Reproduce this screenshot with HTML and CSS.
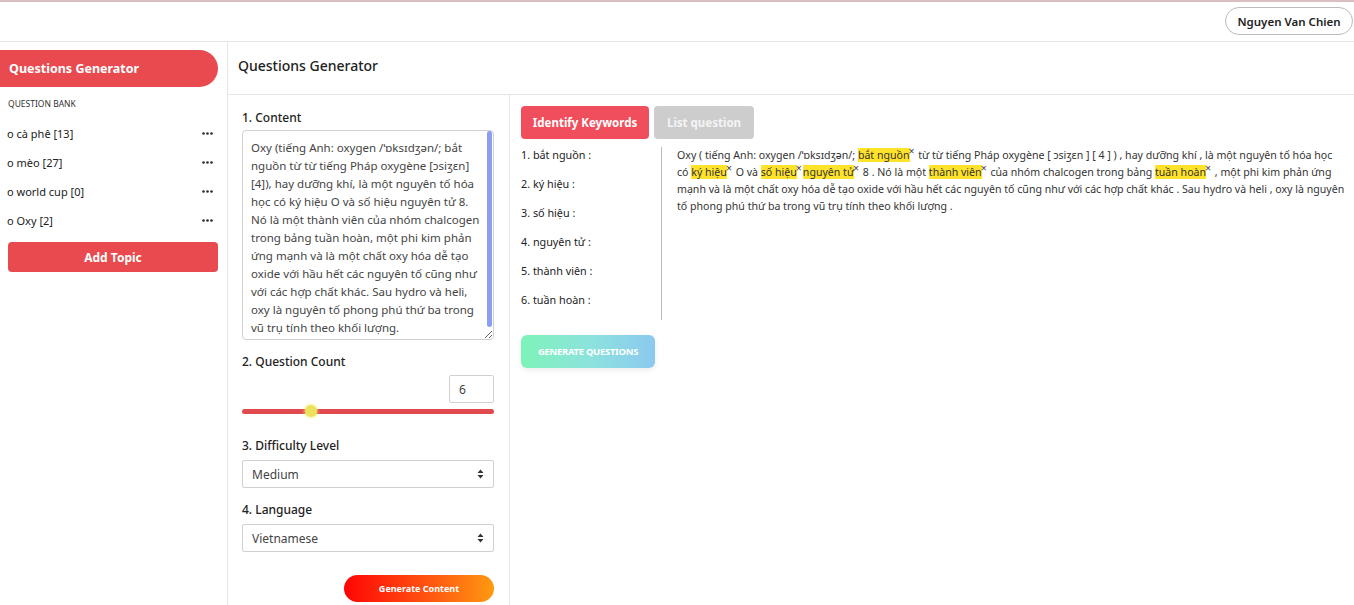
FILE: index.html
```html
<!DOCTYPE html>
<html lang="vi">
<head>
<meta charset="utf-8">
<title>Questions Generator</title>
<link rel="stylesheet" href="styles.css">
</head>
<body>
<header class="topbar">
  <button class="user-btn">Nguyen Van Chien</button>
</header>
<div class="app">
  <aside class="sidebar">
    <div class="brand">Questions Generator</div>
    <div class="bank-title">QUESTION BANK</div>
    <ul class="topics">
      <li class="topic"><span>o cà phê [13]</span><svg class="more" width="11" height="3" viewBox="0 0 11 3"><circle cx="1.5" cy="1.5" r="1.3"/><circle cx="5.5" cy="1.5" r="1.3"/><circle cx="9.5" cy="1.5" r="1.3"/></svg></li>
      <li class="topic"><span>o mèo [27]</span><svg class="more" width="11" height="3" viewBox="0 0 11 3"><circle cx="1.5" cy="1.5" r="1.3"/><circle cx="5.5" cy="1.5" r="1.3"/><circle cx="9.5" cy="1.5" r="1.3"/></svg></li>
      <li class="topic"><span>o world cup [0]</span><svg class="more" width="11" height="3" viewBox="0 0 11 3"><circle cx="1.5" cy="1.5" r="1.3"/><circle cx="5.5" cy="1.5" r="1.3"/><circle cx="9.5" cy="1.5" r="1.3"/></svg></li>
      <li class="topic"><span>o Oxy [2]</span><svg class="more" width="11" height="3" viewBox="0 0 11 3"><circle cx="1.5" cy="1.5" r="1.3"/><circle cx="5.5" cy="1.5" r="1.3"/><circle cx="9.5" cy="1.5" r="1.3"/></svg></li>
    </ul>
    <button class="add-topic">Add Topic</button>
  </aside>
  <main class="main">
    <div class="main-header">Questions Generator</div>
    <div class="main-body">
      <section class="form">
        <label class="field-label">1. Content</label>
        <div class="content-wrap">
          <textarea class="content-box">Oxy (tiếng Anh: oxygen /ˈɒksɪdʒən/; bắt nguồn từ từ tiếng Pháp oxygène [ɔsiʒɛn] [4]), hay dưỡng khí, là một nguyên tố hóa học có ký hiệu O và số hiệu nguyên tử 8. Nó là một thành viên của nhóm chalcogen trong bảng tuần hoàn, một phi kim phản ứng mạnh và là một chất oxy hóa dễ tạo oxide với hầu hết các nguyên tố cũng như với các hợp chất khác. Sau hydro và heli, oxy là nguyên tố phong phú thứ ba trong vũ trụ tính theo khối lượng.</textarea>
          <span class="scroll-thumb"></span>
        </div>
        <label class="field-label">2. Question Count</label>
        <div class="count-row"><input class="count-input" type="text" value="6"></div>
        <input class="range" type="range" min="1" max="20" value="6">
        <label class="field-label">3. Difficulty Level</label>
        <div class="select-wrap">
          <select class="select"><option>Medium</option></select>
          <svg class="select-arrow" width="7" height="10" viewBox="0 0 7 10"><path d="M3.5 0.5 L6.5 4 H0.5 Z M3.5 9.5 L6.5 6 H0.5 Z" fill="#333"/></svg>
        </div>
        <label class="field-label">4. Language</label>
        <div class="select-wrap">
          <select class="select"><option>Vietnamese</option></select>
          <svg class="select-arrow" width="7" height="10" viewBox="0 0 7 10"><path d="M3.5 0.5 L6.5 4 H0.5 Z M3.5 9.5 L6.5 6 H0.5 Z" fill="#333"/></svg>
        </div>
        <div class="gen-row"><button class="gen-content">Generate Content</button></div>
      </section>
      <section class="result">
        <div class="tabs">
          <button class="tab tab-active">Identify Keywords</button>
          <button class="tab tab-muted">List question</button>
        </div>
        <div class="kw-area">
          <ol class="kw-list">
            <li>1. bắt nguồn :</li>
            <li>2. ký hiệu :</li>
            <li>3. số hiệu :</li>
            <li>4. nguyên tử :</li>
            <li>5. thành viên :</li>
            <li>6. tuần hoàn :</li>
          </ol>
          <p class="kw-text">Oxy ( tiếng Anh: oxygen /ˈɒksɪdʒən/; <mark class="hl">bắt nguồn</mark><sup class="x">×</sup> từ từ tiếng Pháp oxygène [ ɔsiʒɛn ] [ 4 ] ) , hay dưỡng khí , là một nguyên tố hóa học<br>có <mark class="hl">ký hiệu</mark><sup class="x">×</sup> O và <mark class="hl">số hiệu</mark><sup class="x">×</sup><mark class="hl">nguyên tử</mark><sup class="x">×</sup> 8 . Nó là một <mark class="hl">thành viên</mark><sup class="x">×</sup> của nhóm chalcogen trong bảng <mark class="hl">tuần hoàn</mark><sup class="x">×</sup> , một phi kim phản ứng<br>mạnh và là một chất oxy hóa dễ tạo oxide với hầu hết các nguyên tố cũng như với các hợp chất khác . Sau hydro và heli , oxy là nguyên<br>tố phong phú thứ ba trong vũ trụ tính theo khối lượng .</p>
        </div>
        <button class="gen-questions">GENERATE QUESTIONS</button>
      </section>
    </div>
  </main>
</div>
</body>
</html>
```

FILE: styles.css
```css
* { box-sizing: border-box; }
html, body { margin: 0; padding: 0; }
body {
  font-family: "Noto Sans", "Open Sans", sans-serif;
  color: #222;
  background: #fff;
  height: 605px;
  overflow: hidden;
}
button { font-family: inherit; cursor: pointer; }

.topbar {
  height: 42px;
  border-top: 2px solid #d9bfc2;
  border-bottom: 1px solid #e6e6e6;
  display: flex;
  justify-content: flex-end;
  align-items: flex-start;
  padding: 5px 1px 0 0;
}
.user-btn {
  height: 28px;
  width: 128px;
  padding: 0;
  border: 1px solid #bbb;
  border-radius: 14px;
  background: #fff;
  font-size: 11.5px;
  font-weight: 600;
  color: #222;
  white-space: nowrap;
}

.app {
  display: flex;
  height: calc(605px - 42px);
}
.sidebar {
  width: 228px;
  border-right: 1px solid #e6e6e6;
  padding-top: 8px;
  flex-shrink: 0;
}
.brand {
  width: 218px;
  height: 37px;
  background: #e84a4f;
  color: #fff;
  font-weight: 700;
  font-size: 12.5px;
  display: flex;
  align-items: center;
  padding-left: 9px;
  border-radius: 0 19px 19px 0;
}
.bank-title {
  font-size: 8.5px;
  color: #333;
  margin: 11px 0 0 8px;
}
.topics {
  list-style: none;
  margin: 10px 0 0;
  padding: 0;
}
.topic {
  display: flex;
  justify-content: space-between;
  align-items: center;
  height: 29px;
  padding: 0 14px 0 7px;
  font-size: 11px;
  color: #222;
}
.more {
  fill: #2a2a2a;
}
.add-topic {
  display: block;
  width: 210px;
  height: 30px;
  margin: 7px 0 0 8px;
  border: none;
  border-radius: 4px;
  background: #e84a4f;
  color: #fff;
  font-weight: 700;
  font-size: 12px;
}

.main {
  flex: 1;
  display: flex;
  flex-direction: column;
  min-height: 0;
}
.main-header {
  flex-shrink: 0;
  height: 53px;
  border-bottom: 1px solid #e6e6e6;
  display: flex;
  align-items: center;
  padding: 0 0 5px 10px;
  font-size: 14px;
  font-weight: 500;
  color: #222;
}
.main-body {
  flex: 1;
  min-height: 0;
  display: flex;
}
.form {
  width: 282px;
  border-right: 1px solid #e6e6e6;
  padding: 15px 15px 0 14px;
  display: flex;
  flex-direction: column;
}
.field-label {
  font-size: 12px;
  font-weight: 500;
  color: #222;
  line-height: 16px;
}
.content-wrap {
  position: relative;
  flex-shrink: 0;
  width: 252px;
  height: 210px;
  margin-top: 4px;
  margin-bottom: 14px;
}
.content-box {
  display: block;
  width: 252px;
  height: 210px;
  border: 1px solid #d0d0d0;
  border-radius: 4px;
  padding: 8px 8px 0 8px;
  font-family: inherit;
  font-size: 11.5px;
  line-height: 18px;
  color: #444;
  resize: vertical;
  overflow: hidden;
}
.scroll-thumb {
  position: absolute;
  right: 2px;
  top: 1px;
  width: 5px;
  height: 196px;
  border-radius: 3px;
  background: #8c9ef0;
  pointer-events: none;
}
.count-row {
  display: flex;
  justify-content: flex-end;
  margin-top: 5px;
}
.count-input {
  width: 45px;
  height: 28px;
  border: 1px solid #d0d0d0;
  border-radius: 2px;
  font-family: inherit;
  font-size: 12px;
  color: #444;
  padding: 0 0 0 9px;
}
.range {
  -webkit-appearance: none;
  appearance: none;
  flex-shrink: 0;
  width: 252px;
  height: 14px;
  margin: 1px 0 20px;
  background: transparent;
}
.range::-webkit-slider-runnable-track {
  height: 5px;
  background: #e04a4f;
  border-radius: 3px;
}
.range::-webkit-slider-thumb {
  -webkit-appearance: none;
  width: 12px;
  height: 12px;
  margin-top: -3.5px;
  border-radius: 50%;
  background: #ece25e;
  box-shadow: 0 0 3px 1px rgba(245, 240, 120, 0.7);
}
.select-wrap {
  position: relative;
  margin-top: 6px;
  margin-bottom: 14px;
}
.select {
  -webkit-appearance: none;
  appearance: none;
  width: 252px;
  height: 28px;
  border: 1px solid #d0d0d0;
  border-radius: 2px;
  background: #fff;
  font-family: inherit;
  font-size: 12px;
  color: #444;
  padding-left: 9px;
}
.select-arrow {
  position: absolute;
  right: 10px;
  top: 9px;
}
.gen-row {
  display: flex;
  justify-content: flex-end;
  margin-top: 9px;
}
.gen-content {
  width: 150px;
  height: 27px;
  border: none;
  border-radius: 14px;
  background: linear-gradient(90deg, #ff0505 0%, #ff5a12 60%, #ff9a10 100%);
  color: #fff;
  font-size: 9px;
  font-weight: 700;
}

.result {
  flex: 1;
  padding: 11px 0 0 11px;
}
.tabs {
  display: flex;
  gap: 5px;
}
.tab {
  height: 33px;
  border: none;
  border-radius: 4px;
  color: #fff;
  font-weight: 700;
  font-size: 11.5px;
  padding: 0;
  white-space: nowrap;
}
.tab-active { background: #f04e5c; width: 128px; }
.tab-muted { background: #cdcdcd; color: #f4f4f4; width: 100px; }
.kw-area {
  display: flex;
  margin-top: 8px;
}
.kw-list {
  list-style: none;
  margin: 0;
  padding: 0;
  width: 141px;
  border-right: 1px solid #bbb;
  height: 173px;
}
.kw-list li {
  height: 29px;
  font-size: 10.8px;
  line-height: 16px;
  color: #222;
}
.kw-text {
  flex: 1;
  margin: 0;
  padding: 0 2px 0 15px;
  font-size: 10.6px;
  line-height: 17px;
  color: #333;
  white-space: nowrap;
}
.hl {
  background: #ffe22a;
  color: #333;
}
.x {
  font-size: 10.5px;
  line-height: 0;
  vertical-align: 4px;
  color: #444;
  margin-left: -1px;
  margin-right: 1px;
}
.gen-questions {
  display: block;
  margin-top: 15px;
  width: 134px;
  height: 33px;
  border: none;
  border-radius: 6px;
  background: linear-gradient(90deg, #7ef3b8 0%, #8ce3dc 50%, #8cc9f0 100%);
  color: #fff;
  font-size: 9.5px;
  font-weight: 700;
  letter-spacing: -0.3px;
  box-shadow: 0 2px 6px rgba(0, 0, 0, 0.08);
}
```
